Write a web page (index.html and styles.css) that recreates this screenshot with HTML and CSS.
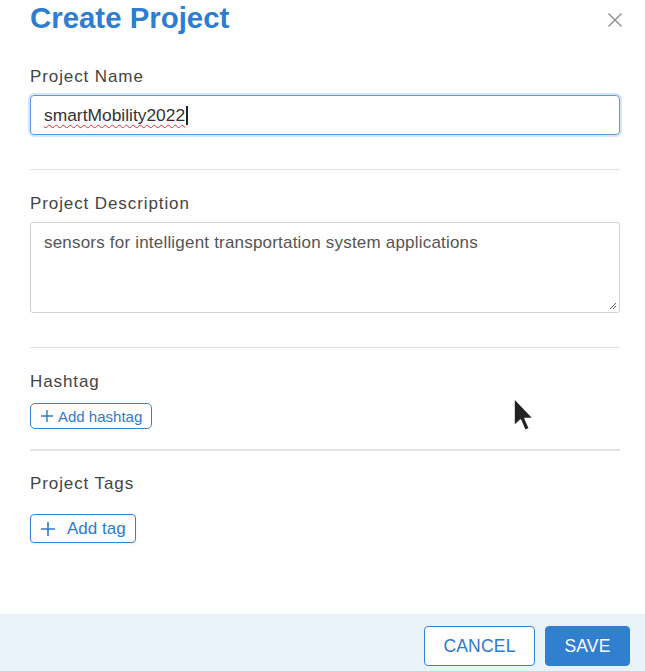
FILE: index.html
```html
<!DOCTYPE html>
<html>
<head>
<meta charset="utf-8">
<link rel="stylesheet" href="styles.css">
</head>
<body>
<div class="modal">
  <div class="header">
    <h1 class="title">Create Project</h1>
    <svg class="close" width="14" height="14" viewBox="0 0 14 14"><path d="M0.5 0.5L13.5 13.5M13.5 0.5L0.5 13.5" stroke="#8a8a8a" stroke-width="1.4" fill="none"/></svg>
  </div>
  <div class="body">
    <div class="section first">
      <label class="label">Project Name</label>
      <div class="input focus"><span class="typed">smartMobility2022</span><span class="caret"></span></div>
    </div>
    <div class="divider"></div>
    <div class="section">
      <label class="label">Project Description</label>
      <div class="textarea">sensors for intelligent transportation system applications
        <svg class="grip" width="8" height="8" viewBox="0 0 8 8"><path d="M7 1L1 7M7 4L4 7" stroke="#666" stroke-width="1"/></svg>
      </div>
    </div>
    <div class="divider"></div>
    <div class="section">
      <label class="label">Hashtag</label>
      <button class="chip small"><svg class="plus" width="12" height="12" viewBox="0 0 12 12"><path d="M6 0V12M0 6H12" stroke="#2f7acc" stroke-width="1.4"/></svg>Add hashtag</button>
    </div>
    <div class="divider thick"></div>
    <div class="section tags">
      <label class="label">Project Tags</label>
      <button class="chip large"><svg class="plus" width="14" height="14" viewBox="0 0 14 14"><path d="M7 0V14M0 7H14" stroke="#2f7acc" stroke-width="1.6"/></svg>Add tag</button>
    </div>
  </div>
  <div class="footer">
    <button class="btn outline">CANCEL</button>
    <button class="btn primary">SAVE</button>
  </div>
  <svg class="cursor" width="26" height="40" viewBox="0 0 26 40"><path d="M3 2L3 30L9.5 24L14 34.5L18.5 32.5L14 22.5L22.5 22.5Z" fill="#222" stroke="#fff" stroke-width="1.6" stroke-linejoin="round"/></svg>
</div>
</body>
</html>
```
FILE: styles.css
```css
html, body {
  margin: 0;
  padding: 0;
  background: #fff;
}
.modal {
  position: relative;
  width: 645px;
  height: 671px;
  display: flex;
  flex-direction: column;
  font-family: "Liberation Sans", Arial, sans-serif;
  overflow: hidden;
}
.header {
  display: flex;
  justify-content: space-between;
  align-items: flex-start;
  padding: 0 23px 0 30px;
  height: 38px;
}
.title {
  margin: 0;
  font-family: "Liberation Sans", Arial, sans-serif;
  font-weight: 700;
  font-size: 29.4px;
  line-height: 36px;
  color: #2f7dd0;
}
.close {
  margin-top: 13px;
}
.body {
  flex: 1;
  padding: 0 25px 0 30px;
}
.section {
  display: flex;
  flex-direction: column;
  align-items: flex-start;
}
.label {
  font-size: 17px;
  color: #444;
  letter-spacing: 0.9px;
  line-height: 20px;
  margin-top: 24px;
  margin-bottom: 8px;
}
.section.first .label {
  margin-top: 29px;
}
.section.tags .label {
  margin-top: 23px;
}
.input {
  box-sizing: border-box;
  width: 590px;
  height: 40px;
  border: 1px solid #ccc;
  border-radius: 4px;
  display: flex;
  align-items: center;
  padding: 0 13px;
  font-size: 17.4px;
  color: #333;
}
.input.focus {
  border-color: #5a9be0;
  box-shadow: 0 0 0 2px #d6e6f7;
}
.typed {
  text-decoration: underline wavy #e03030;
  text-decoration-thickness: 1px;
  text-underline-offset: 3px;
  text-decoration-skip-ink: none;
}
.caret {
  display: inline-block;
  width: 2px;
  height: 19px;
  background: #222;
  margin-left: 1px;
}
.divider {
  height: 1px;
  background: #e4e4e4;
  margin-top: 34px;
}
.divider.thick {
  height: 2px;
  margin-top: 20px;
}
.textarea {
  position: relative;
  box-sizing: border-box;
  width: 590px;
  height: 91px;
  border: 1px solid #d2d2d2;
  border-radius: 3px;
  padding: 10px 13px;
  font-family: "Liberation Sans", Arial, sans-serif;
  font-size: 17px;
  letter-spacing: 0.2px;
  line-height: 20px;
  color: #555;
}
.grip {
  position: absolute;
  right: 2px;
  bottom: 2px;
}
.chip {
  display: flex;
  align-items: center;
  background: #fff;
  border: 1px solid #3a83d0;
  color: #2f7acc;
  font-family: "Liberation Sans", Arial, sans-serif;
  cursor: pointer;
}
.chip.small {
  height: 26px;
  padding: 0 9px 0 10px;
  border-radius: 5px;
  font-size: 15px;
  margin-top: 3px;
}
.chip.small .plus {
  margin-right: 5px;
}
.chip.large {
  height: 29px;
  padding: 0 9px 0 10px;
  border-radius: 4px;
  font-size: 17px;
  margin-top: 12px;
  box-shadow: 0 1px 2px rgba(0,0,0,0.08);
}
.chip.large .plus {
  margin-right: 12px;
}
.footer {
  height: 57px;
  background: #e9f1f9;
  display: flex;
  justify-content: flex-end;
  align-items: flex-start;
  padding: 12px 15px 0 0;
  box-sizing: border-box;
  gap: 10px;
}
.btn {
  height: 40px;
  border-radius: 4px;
  font-family: "Liberation Sans", Arial, sans-serif;
  font-size: 17.5px;
  letter-spacing: 0.2px;
  cursor: pointer;
}
.btn.outline {
  width: 111px;
  background: #fff;
  border: 1px solid #3a83d0;
  color: #2f7acc;
}
.btn.primary {
  width: 85px;
  background: #3180d0;
  border: 1px solid #3180d0;
  color: #fff;
}
.cursor {
  position: absolute;
  left: 511px;
  top: 396px;
}
```
